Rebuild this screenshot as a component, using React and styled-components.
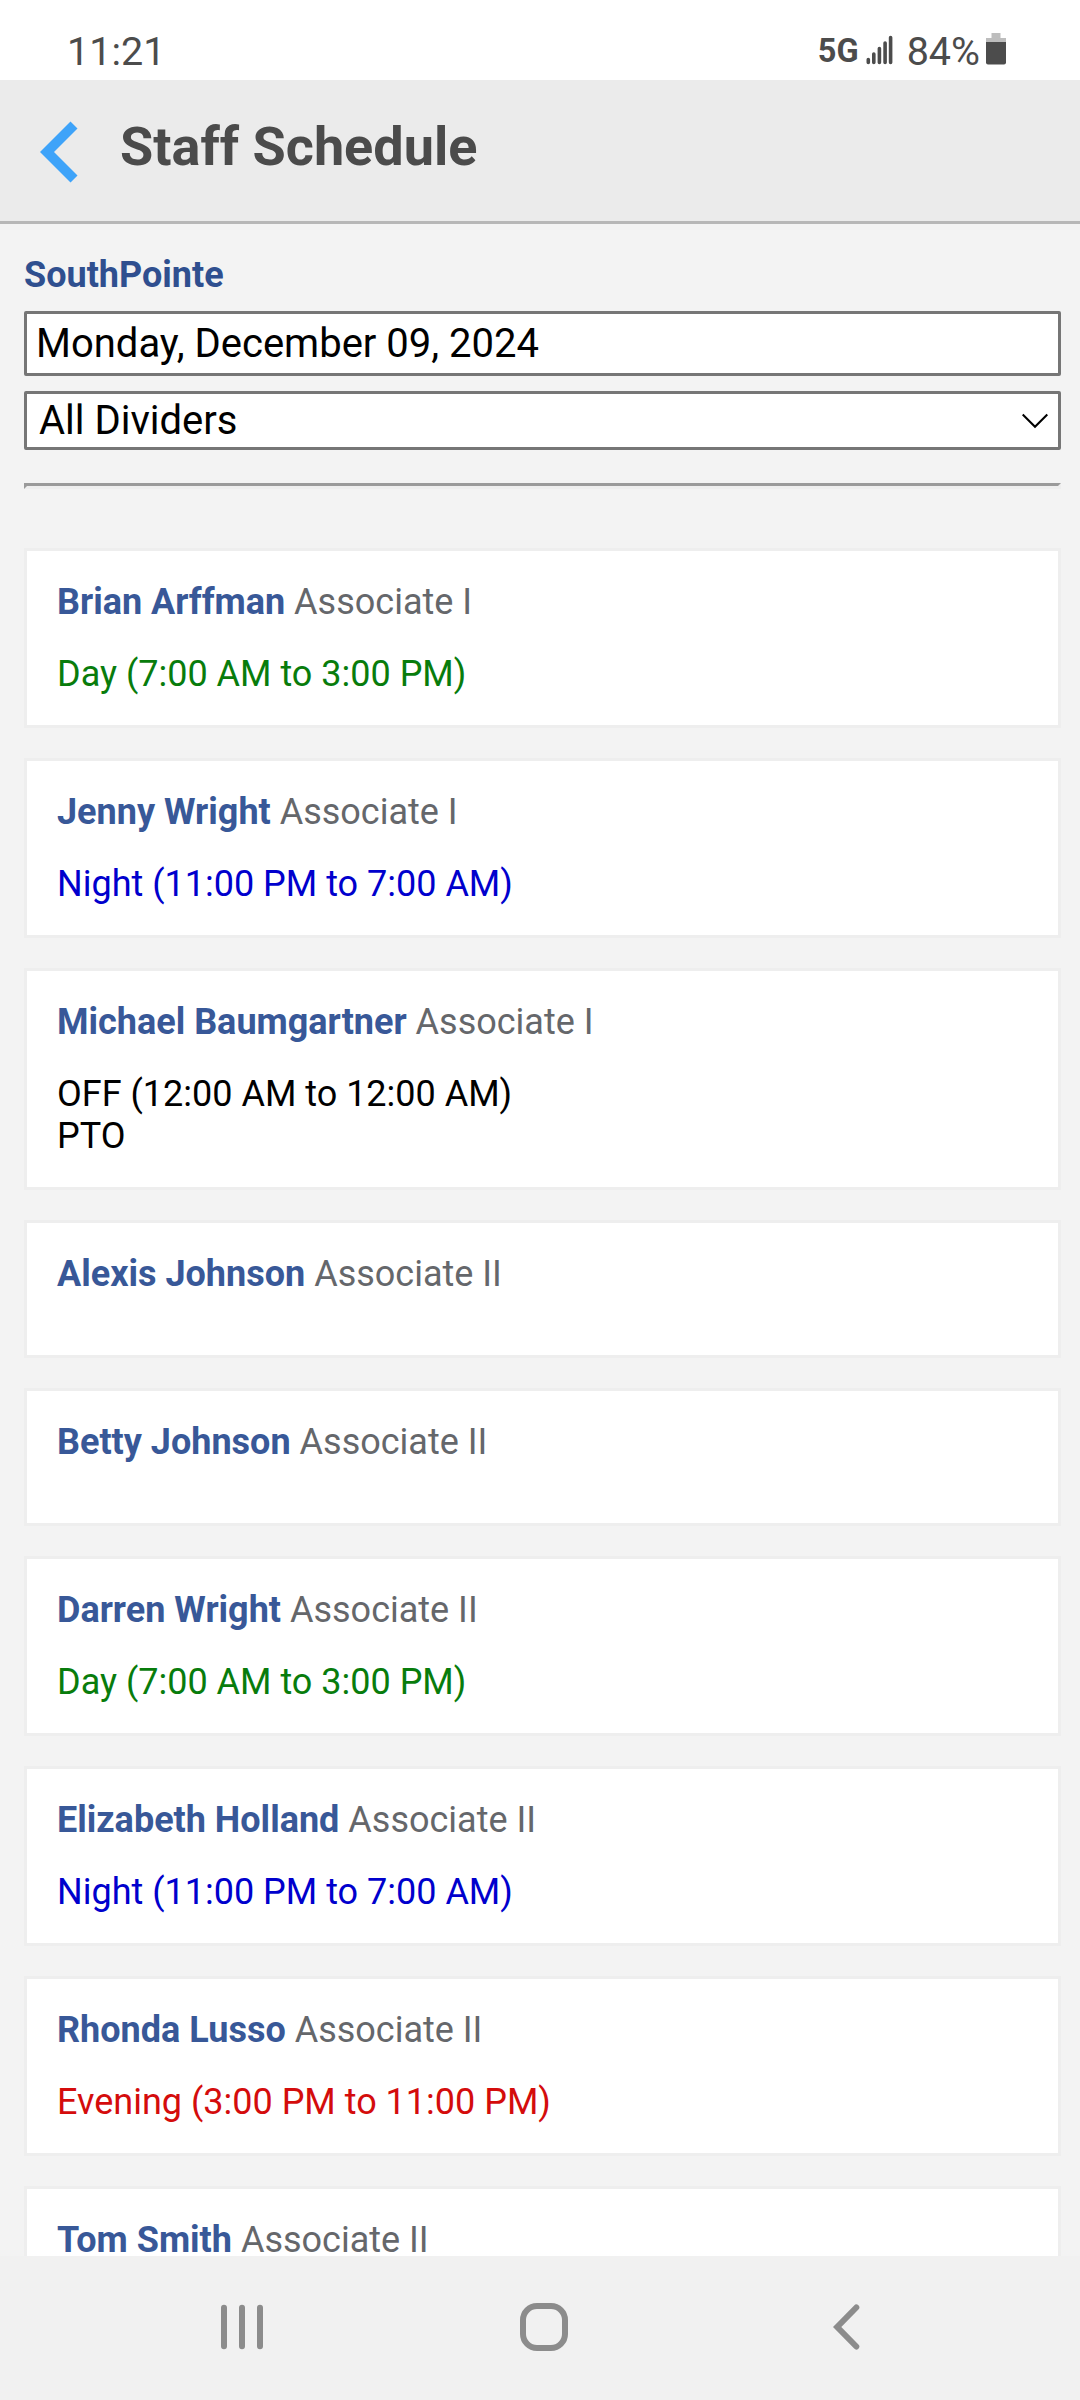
import React from 'react';
import styled, { createGlobalStyle } from 'styled-components';

const GlobalStyle = createGlobalStyle`
  *, *::before, *::after { box-sizing: border-box; }
  body { margin: 0; background: #f3f3f3; }
`;

const Screen = styled.div`
  display: flex;
  flex-direction: column;
  width: 1080px;
  height: 2400px;
  overflow: hidden;
  background: #f3f3f3;
  color: #000;
  font-family: Roboto, 'Liberation Sans', sans-serif;
  font-size: 36px;
  line-height: 42px;
`;

const StatusBar = styled.div`
  display: flex;
  flex: none;
  align-items: flex-start;
  justify-content: space-between;
  height: 80px;
  padding: 28px 74px 0 67px;
  background: #fff;
  color: #4c4c4c;
`;

const StatusText = styled.span`
  font-size: 39.5px;
  line-height: 48px;
`;

const StatusGroup = styled.div`
  display: flex;
  align-items: flex-start;
`;

const Network = styled.span`
  margin-right: 7px;
  font-size: 32.5px;
  font-weight: 700;
  line-height: 46px;
`;

const SignalIcon = styled.svg`
  display: block;
  width: 27px;
  height: 31px;
  margin: 6px 14px 0 0;
`;

const BatteryIcon = styled.svg`
  display: block;
  width: 20px;
  height: 32px;
  margin: 5px 0 0 6px;
`;

const Header = styled.header`
  display: flex;
  flex: none;
  align-items: flex-start;
  height: 144px;
  padding: 0 40px;
  border-bottom: 3px solid #b7b7b7;
  background: #ebebeb;
`;

const BackIcon = styled.svg`
  display: block;
  width: 38px;
  height: 62px;
  margin-top: 41px;
`;

const Title = styled.h1`
  margin: 35px 0 0 42px;
  color: #4b4b4b;
  font-size: 54px;
  font-weight: 700;
  line-height: 63px;
`;

const Content = styled.main`
  display: flex;
  flex: 1;
  flex-direction: column;
  min-height: 0;
  padding: 30px 19px 0 24px;
  overflow: hidden;
`;

const Facility = styled.div`
  flex: none;
  height: 42px;
  color: #2f4f8f;
  font-weight: 700;
`;

const Field = styled.div`
  display: flex;
  flex: none;
  align-items: center;
  justify-content: space-between;
  height: ${(p) => p.$height}px;
  margin-top: 15px;
  padding: 0 10px 0 ${(p) => p.$indent}px;
  border: 3px solid #767676;
  border-radius: 2px;
  background: #fff;
  font-size: 40px;
  line-height: 47px;
`;

const CaretIcon = styled.svg`
  display: block;
  width: 26px;
  height: 16px;
`;

const Rule = styled.hr`
  flex: none;
  width: 100%;
  height: 6px;
  margin: 33px 0 59px;
  border: 3px solid;
  border-color: #9a9a9a #eee #eee #9a9a9a;
`;

const CardList = styled.div`
  display: flex;
  flex-direction: column;
  gap: 30px;
`;

const Card = styled.article`
  display: flex;
  flex: none;
  flex-direction: column;
  gap: 30px;
  padding: 30px;
  border: 3px solid #eee;
  background: #fff;
`;

const Person = styled.div`
  height: 42px;
  color: #65676b;
  white-space: nowrap;
`;

const Name = styled.b`
  color: #385898;
  font-weight: 700;
`;

const Shift = styled.div`
  color: ${(p) => p.$color};
`;

const NavBar = styled.nav`
  display: flex;
  flex: none;
  align-items: flex-start;
  height: 144px;
  padding: 46px 220px 0;
  background: #f1f1f1;
`;

const NavIcon = styled.svg`
  display: block;
  flex: none;
  width: ${(p) => p.$width}px;
  height: 50px;
  margin-right: ${(p) => p.$after || 0}px;
  fill: none;
  stroke: #8c8c8c;
  stroke-width: 6;
  stroke-linecap: round;
`;

const DAY = { lines: ['Day (7:00 AM to 3:00 PM)'], color: '#087c0c' };
const NIGHT = { lines: ['Night (11:00 PM to 7:00 AM)'], color: '#0000cd' };
const EVENING = { lines: ['Evening (3:00 PM to 11:00 PM)'], color: '#d40c0c' };
const OFF = { lines: ['OFF (12:00 AM to 12:00 AM)', 'PTO'], color: '#000' };
const NONE = { lines: [], color: '#000' };

const staff = [
  { name: 'Brian Arffman', role: 'Associate I', shift: DAY },
  { name: 'Jenny Wright', role: 'Associate I', shift: NIGHT },
  { name: 'Michael Baumgartner', role: 'Associate I', shift: OFF },
  { name: 'Alexis Johnson', role: 'Associate II', shift: NONE },
  { name: 'Betty Johnson', role: 'Associate II', shift: NONE },
  { name: 'Darren Wright', role: 'Associate II', shift: DAY },
  { name: 'Elizabeth Holland', role: 'Associate II', shift: NIGHT },
  { name: 'Rhonda Lusso', role: 'Associate II', shift: EVENING },
  { name: 'Tom Smith', role: 'Associate II', shift: NONE },
];

function StaffCard({ name, role, shift }) {
  return (
    <Card>
      <Person>
        <Name>{name}</Name> {role}
      </Person>
      <Shift $color={shift.color}>
        {shift.lines.map((line) => (
          <div key={line}>{line}</div>
        ))}
      </Shift>
    </Card>
  );
}

export default function App() {
  return (
    <Screen>
      <GlobalStyle />
      <StatusBar>
        <StatusText>11:21</StatusText>
        <StatusGroup>
          <Network>5G</Network>
          <SignalIcon viewBox="0 0 27 31" fill="none" stroke="#4c4c4c" strokeWidth="3.6" strokeLinecap="round">
            <path d="M2.3 25.5V28.5M7.8 20V28.5M13.4 14.5V28.5M19.1 9V28.5M24.6 3.5V28.5" />
          </SignalIcon>
          <StatusText>84%</StatusText>
          <BatteryIcon viewBox="0 0 20 32">
            <path d="M5.5 0h9v5H20v4H0V5h5.5z" fill="#bdbdbd" />
            <path d="M0 9h20v20.500a2 2 0 0 1-2 2H2a2 2 0 0 1-2-2z" fill="#4c4c4c" />
          </BatteryIcon>
        </StatusGroup>
      </StatusBar>

      <Header>
        <BackIcon viewBox="0 0 38 62">
          <path d="M30.500 0.500L37.500 7.500L14 31L37.500 54.500L30.500 61.500L0 31Z" fill="#3ea3f9" />
        </BackIcon>
        <Title>Staff Schedule</Title>
      </Header>

      <Content>
        <Facility>SouthPointe</Facility>
        <Field $height={65} $indent={9}>Monday, December 09, 2024</Field>
        <Field $height={59} $indent={12}>
          All Dividers
          <CaretIcon viewBox="0 0 26 16" fill="none" stroke="#000" strokeWidth="2.1">
            <path d="M0.700 1.500L13 13.700L25.300 1.500" />
          </CaretIcon>
        </Field>
        <Rule />
        <CardList>
          {staff.map((person) => (
            <StaffCard key={person.name} {...person} />
          ))}
        </CardList>
      </Content>

      <NavBar>
        <NavIcon $width={44} $after={256} viewBox="0 0 44 50">
          <path d="M4 5.700V44.300M22 5.700V44.300M40 5.700V44.300" />
        </NavIcon>
        <NavIcon $width={48} $after={264} viewBox="0 0 48 50">
          <rect x="3" y="4" width="42" height="42" rx="14" />
        </NavIcon>
        <NavIcon $width={28} viewBox="0 0 28 50">
          <path d="M24.300 5.500L5.200 25L24.300 44.500" />
        </NavIcon>
      </NavBar>
    </Screen>
  );
}
